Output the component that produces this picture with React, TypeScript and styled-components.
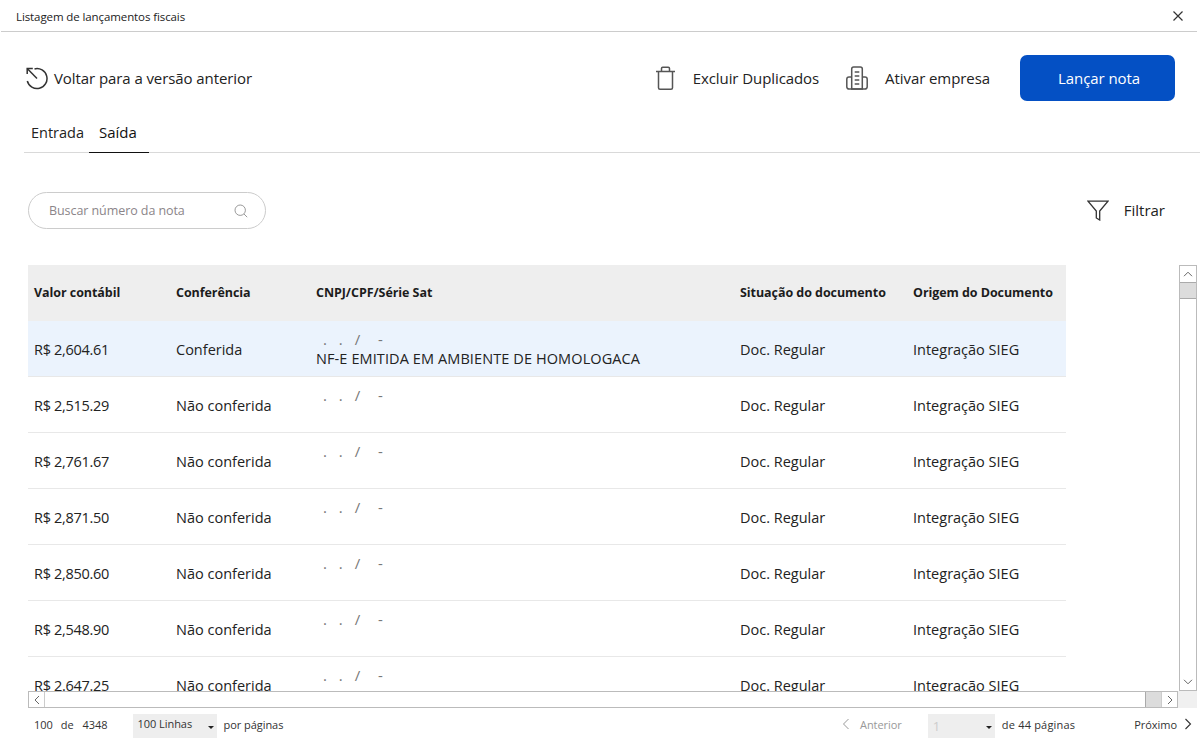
import React from "react";
import styled, { createGlobalStyle } from "styled-components";

const Global = createGlobalStyle`
  html, body { margin: 0; padding: 0; background: #fff; }
  body { font-family: "Open Sans", "Noto Sans", "Liberation Sans", sans-serif; color: #222; overflow: hidden; }
  * { box-sizing: border-box; }
`;

const Page = styled.div`
  width: 1200px; height: 743px; display: flex; flex-direction: column; overflow: hidden; background: #fff;
`;
const TitleBar = styled.header`
  height: 32px; flex: none; display: flex; align-items: center; justify-content: space-between;
  margin-right: 3px; margin-left: 1px; padding: 1px 13px 0 15px; border-bottom: 1px solid #ccc;
`;
const Title = styled.span`font-size: 11.5px; letter-spacing: -0.1px; color: #222;`;
const CloseBtn = styled.button`
  border: 0; background: none; padding: 0; width: 12px; height: 12px; display: flex; color: #333; margin-bottom: 1px;
`;
const Toolbar = styled.div`
  flex: none; display: flex; align-items: center; justify-content: space-between;
  padding: 23px 25px 20px 26px;
`;
const ToolLink = styled.div`
  display: flex; align-items: center; gap: 6px; font-size: 15px; color: #222; letter-spacing: -0.08px; line-height: 24px;
`;
const Actions = styled.div`display: flex; align-items: center;`;
const IconBtn = styled.div`
  display: flex; align-items: center; gap: 17px; font-size: 15px; letter-spacing: -0.08px; margin-left: 27px; color: #222;
`;
const Primary = styled.button`
  width: 155px; height: 46px; margin-left: 30px; border: 0; border-radius: 7px; background: #0450c4; color: #fff;
  font: inherit; font-size: 15px; letter-spacing: -0.08px; padding: 0 0 0 3px;
`;
const Tabs = styled.nav`
  height: 32px; flex: none; margin-left: 24px; display: flex; border-bottom: 1px solid #d9d9d9;
`;
const Tab = styled.div<{ $active?: boolean; $w: number; $pl: number }>`
  width: ${p => p.$w}px; height: 32px; padding: 1px 0 0 ${p => p.$pl}px;
  font-size: ${p => (p.$active ? 15 : 14.5)}px; line-height: ${p => (p.$active ? 21 : 22)}px; color: ${p => (p.$active ? "#111" : "#222")};
  font-weight: ${p => (p.$active ? 500 : 400)};
  border-bottom: 1px solid ${p => (p.$active ? "#111" : "transparent")};
`;
const FilterRow = styled.div`
  flex: none; height: 112px; padding: 39px 35px 0 28px; display: flex; justify-content: space-between; align-items: flex-start;
`;
const Search = styled.div`
  width: 238px; height: 37px; border: 1px solid #ccc; border-radius: 19px; display: flex; align-items: center;
  justify-content: space-between; padding: 0 17px 0 20px;
`;
const SearchText = styled.span`font-size: 12.5px; letter-spacing: -0.07px; color: #8b8589;`;
const FilterBtn = styled.div`
  display: flex; align-items: center; gap: 15px; height: 37px; font-size: 15px; color: #222;
`;
const FilterLabel = styled.span`margin-bottom: 2px;`;
const Grid = styled.div`
  height: 443px; flex: none; margin-left: 28px; margin-right: 4px; display: grid;
  grid-template-columns: 1150px 1fr; grid-template-rows: 426px 17px;
`;
const Viewport = styled.div`overflow: hidden;`;
const Table = styled.table`
  width: 1038px; table-layout: fixed; border-collapse: collapse; font-size: 14.5px; color: #222;
`;
const Th = styled.th<{ $w: number }>`
  width: ${p => p.$w}px; height: 56px; background: #eee; padding: 0 0 2px 6px; text-align: left; font-size: 12.5px; font-weight: 700; color: #1c1c1c; letter-spacing: -0.06px; white-space: nowrap;
`;
const Row = styled.tr<{ $selected?: boolean }>`
  height: ${p => (p.$selected ? 55 : 56)}px; background: ${p => (p.$selected ? "#ebf3fd" : "#fff")}; border-bottom: 1px solid #e8e8e8;
`;
const Td = styled.td`padding: 3px 0 0 6px; white-space: nowrap; vertical-align: middle;`;
const MoneyCell = styled(Td)`letter-spacing: -0.3px;`;
const DocCell = styled(Td)`vertical-align: top; padding-top: 9px;`;
const Mask = styled.div`
  height: 18px; line-height: 18px; padding-left: 7px; color: #777; font-size: 15px; word-spacing: 8px; white-space: nowrap;
`;
const MaskDash = styled.span`margin-left: 6px;`;
const Note = styled.div`line-height: 20px; margin-top: 1px; letter-spacing: 0.1px;`;

const VBar = styled.div`
  border: 1px solid #bbb; display: flex; flex-direction: column; margin-left: 1px; width: 18px;
`;
const BarBtn = styled.div`width: 16px; height: 16px; flex: none; display: flex; align-items: center; justify-content: center; color: #666;`;
const VThumb = styled.div`height: 17px; flex: none; background: #dcdcdc; border-top: 1px solid #aaa; border-bottom: 1px solid #aaa;`;
const Spacer = styled.div`flex: 1;`;
const HBar = styled.div`
  border: 1px solid #bbb; display: flex; align-items: stretch; height: 17px;
`;
const HBtn = styled.div<{ $end?: boolean }>`
  width: 16px; flex: none; display: flex; align-items: center; justify-content: center; color: #666;
  border-${p => (p.$end ? "left" : "right")}: 1px solid #ccc;
`;
const HThumb = styled.div`width: 16px; flex: none; background: #dcdcdc; border-left: 1px solid #aaa;`;
const Corner = styled.div`background: #f0f0f0; width: 19px; height: 17px;`;

const Footer = styled.footer`
  flex: 1; display: flex; align-items: flex-start; justify-content: space-between; padding: 6px 8px 0 34px;
  font-size: 11px; color: #333; letter-spacing: -0.05px;
`;
const Side = styled.div`display: flex; align-items: center; height: 24px;`;
const Fake = styled.div<{ $w: number; $dim?: boolean; $ml: number }>`
  width: ${p => p.$w}px; height: 24px; margin-left: ${p => p.$ml}px; background: #eee; display: flex; justify-content: space-between; align-items: center;
  padding: 0 3px ${p => (p.$dim ? 0 : 5)}px 5px; color: ${p => (p.$dim ? "#ccc" : "#333")}; font-size: ${p => (p.$dim ? 13 : 11)}px;
`;
const Caret = styled.i<{ $dim?: boolean }>`
  display: block; width: 0; height: 0; margin-top: ${p => (p.$dim ? 3 : 8)}px; border-left: 3px solid transparent; border-right: 3px solid transparent; border-top: 3px solid #222;
`;
const Txt = styled.span<{ $ml?: number; $dim?: boolean; $wide?: boolean }>`
  margin-left: ${p => p.$ml ?? 0}px; margin-bottom: 4px; color: ${p => (p.$dim ? "#999" : "#333")};
  letter-spacing: ${p => (p.$wide ? "0.2px" : "inherit")};
`;

const Ico = styled.svg.attrs({ fill: "none", stroke: "currentColor", xmlns: "http://www.w3.org/2000/svg" })`display: block; flex: none;`;
const GrayIcon = styled(Ico)`color: #555;`;
const DarkIcon = styled(Ico)`color: #333;`;
const SearchIcon = styled(Ico)`color: #999;`;
const DimChevron = styled(Ico)`color: #999; margin-bottom: 4px;`;
const NextChevron = styled(Ico)`color: #333; margin: 0 0 4px 7px;`;

const rows = [
  ["R$ 2,604.61", "Conferida"],
  ["R$ 2,515.29", "Não conferida"],
  ["R$ 2,761.67", "Não conferida"],
  ["R$ 2,871.50", "Não conferida"],
  ["R$ 2,850.60", "Não conferida"],
  ["R$ 2,548.90", "Não conferida"],
  ["R$ 2.647.25", "Não conferida"],
];

export default function App() {
  return (
    <Page>
      <Global />
      <TitleBar>
        <Title>Listagem de lançamentos fiscais</Title>
        <CloseBtn aria-label="Fechar">
          <Ico width="12" height="12" viewBox="0 0 12 12" strokeWidth="1.2"><path d="M1.5 1.5l9 9M10.5 1.5l-9 9" /></Ico>
        </CloseBtn>
      </TitleBar>
      <Toolbar>
        <ToolLink>
          <DarkIcon width="22" height="23" viewBox="0 0 22 23" strokeWidth="1.5">
            <path d="M8.5 1.9A10 10 0 1 1 1.3 14" />
            <path d="M1.2 1.5L11 11.5" />
            <path d="M1.2 7V1.5h5.6" />
          </DarkIcon>
          Voltar para a versão anterior
        </ToolLink>
        <Actions>
          <IconBtn>
            <GrayIcon width="21" height="24" viewBox="0 0 21 24" strokeWidth="1.5">
              <path d="M3.5 5.5v16.2a1.5 1.5 0 0 0 1.5 1.5h11a1.5 1.5 0 0 0 1.5-1.5V5.5" />
              <path d="M1 5.5h19M6.5 5.5V2.4a1.2 1.2 0 0 1 1.2-1.2h5.6a1.2 1.2 0 0 1 1.2 1.2v3.1" />
            </GrayIcon>
            Excluir Duplicados
          </IconBtn>
          <IconBtn>
            <GrayIcon width="22" height="24" viewBox="0 0 22 24" strokeWidth="1.5">
              <path d="M5.7 23V3a2 2 0 0 1 2-2h6.6a2 2 0 0 1 2 2v20z" />
              <path d="M5.7 11H3a2.2 2.2 0 0 0-2.2 2.2v7.6A2.2 2.2 0 0 0 3 23h16a2.2 2.2 0 0 0 2.2-2.2v-7.6A2.2 2.2 0 0 0 19 11h-2.7" />
              <path d="M8.7 6h4.6M8.7 10h4.6M8.7 14h4.6M8.7 18h4.6" strokeWidth="1.7" />
            </GrayIcon>
            Ativar empresa
          </IconBtn>
          <Primary>Lançar nota</Primary>
        </Actions>
      </Toolbar>
      <Tabs>
        <Tab $w={65} $pl={7}>Entrada</Tab>
        <Tab $w={60} $pl={10} $active>Saída</Tab>
      </Tabs>
      <FilterRow>
        <Search>
          <SearchText>Buscar número da nota</SearchText>
          <SearchIcon width="14" height="14" viewBox="0 0 14 14" strokeWidth="1">
            <circle cx="6.2" cy="6.2" r="5.2" /><path d="M10 10l3.2 3.2" />
          </SearchIcon>
        </Search>
        <FilterBtn>
          <DarkIcon width="22" height="21" viewBox="0 0 22 21" strokeWidth="1.3">
            <path d="M1 1.2h20L12.7 11v9l-3.4-2V11z" />
          </DarkIcon>
          <FilterLabel>Filtrar</FilterLabel>
        </FilterBtn>
      </FilterRow>
      <Grid>
        <Viewport>
          <Table>
            <thead>
              <tr>
                <Th $w={142}>Valor contábil</Th>
                <Th $w={140}>Conferência</Th>
                <Th $w={424}>CNPJ/CPF/Série Sat</Th>
                <Th $w={173}>Situação do documento</Th>
                <Th $w={159}>Origem do Documento</Th>
              </tr>
            </thead>
            <tbody>
              {rows.map((r, i) => (
                <Row key={r[0]} $selected={i === 0}>
                  <MoneyCell>{r[0]}</MoneyCell>
                  <Td>{r[1]}</Td>
                  <DocCell>
                    <Mask>. . / <MaskDash>-</MaskDash></Mask>
                    {i === 0 && <Note>NF-E EMITIDA EM AMBIENTE DE HOMOLOGACA</Note>}
                  </DocCell>
                  <Td>Doc. Regular</Td>
                  <Td>Integração SIEG</Td>
                </Row>
              ))}
            </tbody>
          </Table>
        </Viewport>
        <VBar>
          <BarBtn>
            <Ico width="10" height="6" viewBox="0 0 10 6"><path d="M1 5.2l4-4 4 4" /></Ico>
          </BarBtn>
          <VThumb />
          <Spacer />
          <BarBtn>
            <Ico width="10" height="6" viewBox="0 0 10 6"><path d="M1 .8l4 4 4-4" /></Ico>
          </BarBtn>
        </VBar>
        <HBar>
          <HBtn>
            <Ico width="6" height="10" viewBox="0 0 6 10"><path d="M5 1L1 5l4 4" /></Ico>
          </HBtn>
          <Spacer />
          <HThumb />
          <HBtn $end>
            <Ico width="6" height="10" viewBox="0 0 6 10"><path d="M1 1l4 4-4 4" /></Ico>
          </HBtn>
        </HBar>
        <Corner />
      </Grid>
      <Footer>
        <Side>
          <Txt>100</Txt>
          <Txt $ml={8}>de</Txt>
          <Txt $ml={9}>4348</Txt>
          <Fake $w={84} $ml={25}>100 Linhas<Caret /></Fake>
          <Txt $ml={7}>por páginas</Txt>
        </Side>
        <Side>
          <DimChevron width="8" height="12" viewBox="0 0 8 12" strokeWidth="1"><path d="M6.5 1L1.5 6l5 5" /></DimChevron>
          <Txt $ml={10} $dim>Anterior</Txt>
          <Fake $w={67} $ml={26} $dim>1<Caret $dim /></Fake>
          <Txt $ml={7} $wide>de 44 páginas</Txt>
          <Txt $ml={59}>Próximo</Txt>
          <NextChevron width="8" height="12" viewBox="0 0 8 12" strokeWidth="1.1"><path d="M1.5 1l5 5-5 5" /></NextChevron>
        </Side>
      </Footer>
    </Page>
  );
}
